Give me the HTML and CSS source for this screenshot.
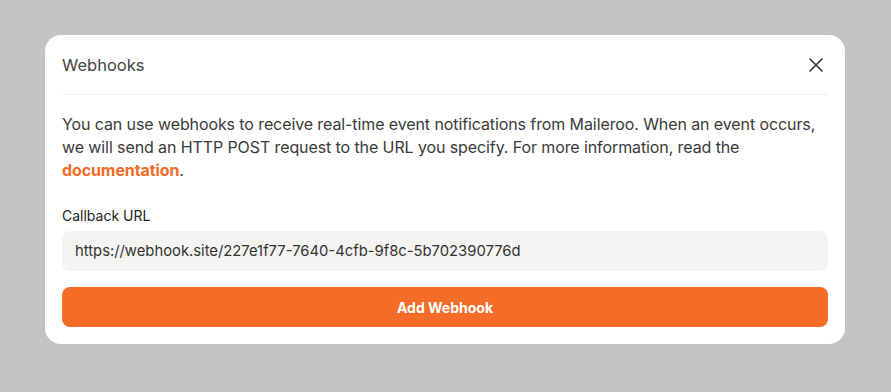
FILE: index.html
```html
<!DOCTYPE html>
<html>
<head>
<meta charset="utf-8">
<link rel="stylesheet" href="styles.css">
</head>
<body>
<div class="overlay">
  <div class="modal">
    <div class="modal-header">
      <h2 class="title">Webhooks</h2>
      <button class="close" aria-label="Close">
        <svg width="16" height="16" viewBox="0 0 16 16"><path d="M2 2L14 14M14 2L2 14" stroke="#333" stroke-width="1.6" stroke-linecap="round"/></svg>
      </button>
    </div>
    <p class="desc">You can use webhooks to receive real-time event notifications from Maileroo. When an event occurs, we will send an HTTP POST request to the URL you specify. For more information, read the <a class="link" href="#">documentation</a>.</p>
    <label class="label">Callback URL</label>
    <div class="input">https://webhook.site/227e1f77-7640-4cfb-9f8c-5b702390776d</div>
    <button class="primary">Add Webhook</button>
  </div>
</div>
</body>
</html>
```
FILE: styles.css
```css
html, body {
  margin: 0;
  padding: 0;
}
body {
  background: #c4c3c1;
  width: 891px;
  height: 392px;
  font-family: "Inter", "Noto Sans", sans-serif;
  color: #333;
}
.overlay {
  padding: 35px 46px 0 45px;
}
.modal {
  background: #fff;
  border-radius: 16px;
  padding: 0 17px 17px 17px;
  display: flex;
  flex-direction: column;
}
.modal-header {
  display: flex;
  align-items: center;
  justify-content: space-between;
  height: 59px;
  border-bottom: 1px solid #ececec;
}
.title {
  margin: 0;
  font-size: 16.5px;
  font-weight: 400;
  color: #444;
}
.close {
  border: 0;
  background: none;
  padding: 0;
  margin-right: 4px;
  display: flex;
}
.desc {
  margin: 18px 0 0 0;
  font-size: 16px;
  line-height: 23px;
  color: #3a3a3a;
  letter-spacing: -0.1px;
}
.link {
  color: #f26b26;
  font-weight: 700;
  text-decoration: none;
}
.label {
  margin-top: 24px;
  font-size: 14px;
  line-height: 20px;
  color: #222;
}
.input {
  margin-top: 5px;
  height: 40px;
  background: #f5f4f2;
  border-radius: 8px;
  padding: 0 13px;
  display: flex;
  align-items: center;
  font-size: 14.8px;
  color: #333;
}
.primary {
  margin-top: 16px;
  height: 40px;
  border: 0;
  border-radius: 8px;
  background: #f46c27;
  color: #fff;
  font-family: inherit;
  font-size: 14px;
  font-weight: 700;
}
```
